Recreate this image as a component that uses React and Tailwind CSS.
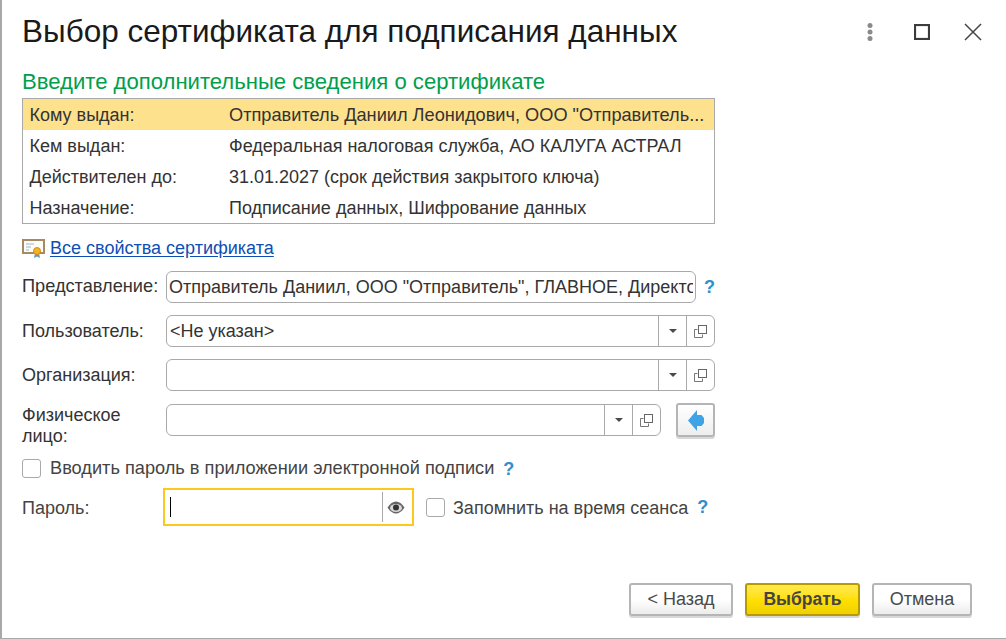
const F = { fontFamily: '"Liberation Sans", Arial, sans-serif' };

function Cert() {
  return (
    <svg width="24" height="21" viewBox="0 0 24 21" className="shrink-0">
      <rect x="1" y="2" width="21" height="13" fill="#fdfdf8" stroke="#a58a64" strokeWidth="2" />
      <path d="M4 6h8M4 9h5M4 12h3" stroke="#9db4cc" strokeWidth="1" />
      <path d="M13 15l-1 5 3-1.500 3 1.500-1-5z" fill="#5b9bd5" />
      <circle cx="15" cy="13" r="3.500" fill="#f5b324" stroke="#d98c10" />
    </svg>
  );
}

function Copy() {
  return (
    <svg width="15" height="15" viewBox="0 0 15 15" fill="none">
      <path d="M4.500 5.500H1.500v8h8V10.500" stroke="#777" />
      <rect x="5.500" y="1.500" width="8" height="8" stroke="#666" />
    </svg>
  );
}

function Tri() {
  return <div className="w-0 h-0 border-l-[4px] border-r-[4px] border-t-[4px] border-l-transparent border-r-transparent border-t-[#4a4a4a]" />;
}

function Q({ className = "" }) {
  return <span className={`text-[#2f8fce] font-bold text-[18px] leading-none ${className}`}>?</span>;
}

function Combo({ value, width }) {
  return (
    <div className={`flex h-[32px] border border-[#a9a9a9] rounded-[6px] bg-white ${width}`}>
      <div className="flex-1 pl-[3px] leading-[30px] text-[#333]">{value}</div>
      <div className="w-[28px] border-l border-[#a9a9a9] flex items-center justify-center"><Tri /></div>
      <div className="w-[28px] border-l border-[#a9a9a9] flex items-center justify-center"><Copy /></div>
    </div>
  );
}

function Check({ className = "" }) {
  return <div className={`w-[19px] h-[19px] border border-[#a9a9a9] rounded-[3px] bg-white shrink-0 ${className}`} />;
}

function Btn({ children, width, primary }) {
  return (
    <button
      className={
        primary
          ? `h-[33px] ${width} rounded-[3px] border-2 border-[#b59a00] bg-gradient-to-b from-[#ffe94a] via-[#ffe000] to-[#f0d000] text-[#444] font-bold text-[17.500px] shadow-[0_2px_0_#d8d8d8]`
          : `h-[33px] ${width} rounded-[3px] border-2 border-[#b5b5b5] bg-gradient-to-b from-white via-white to-[#ececec] text-[#4a4a4a] text-[18px] shadow-[0_2px_0_#d8d8d8]`
      }
    >
      {children}
    </button>
  );
}

const rows = [
  ["Кому выдан:", "Отправитель Даниил Леонидович, ООО \"Отправитель..."],
  ["Кем выдан:", "Федеральная налоговая служба, АО КАЛУГА АСТРАЛ"],
  ["Действителен до:", "31.01.2027 (срок действия закрытого ключа)"],
  ["Назначение:", "Подписание данных, Шифрование данных"],
];

export default function App() {
  return (
    <div style={F} className="w-[1006px] h-[639px] bg-white border-l-2 border-b border-[#a9a9a9] flex flex-col pl-[20px] overflow-hidden text-[18px] text-[#333]">
      <div className="flex items-center h-[64px] shrink-0">
        <h1 className="text-[31.500px] leading-none text-[#1a1a1a] flex-1 whitespace-nowrap">Выбор сертификата для подписания данных</h1>
        <div className="flex items-center gap-[34px] pr-[24px]">
          <svg width="8" height="20" viewBox="0 0 8 20" fill="#8a8a8a" className="mr-[6px]">
            <circle cx="4" cy="3.500" r="2.500" /><circle cx="4" cy="10" r="2.500" /><circle cx="4" cy="16.500" r="2.500" />
          </svg>
          <svg width="16" height="16" viewBox="0 0 16 16" fill="none"><rect x="1" y="1" width="14" height="14" stroke="#3c3c3c" strokeWidth="2.200" /></svg>
          <svg width="18" height="18" viewBox="0 0 18 18" fill="none"><path d="M1 1l16 16M17 1L1 17" stroke="#444" strokeWidth="1.500" /></svg>
        </div>
      </div>

      <div className="text-[22.100px] leading-[24px] text-[#00a04a] mt-[6px] whitespace-nowrap">Введите дополнительные сведения о сертификате</div>

      <div className="w-[693px] h-[126px] border border-[#a9a9a9] mt-[4px] shrink-0">
        {rows.map(([a, b], i) => (
          <div key={a} className={`flex h-[31px] leading-[32px] pl-[6.500px] text-[#333] ${i === 0 ? "bg-[#fde18c]" : ""}`}>
            <div className="w-[199.500px]">{a}</div>
            <div className={`whitespace-nowrap ${i === 0 ? "text-[18.200px]" : ""}`}>{b}</div>
          </div>
        ))}
      </div>

      <div className="flex items-center h-[22px] mt-[13px] gap-[4px] shrink-0">
        <Cert />
        <a className="text-[#0d4fb5] underline underline-offset-2 leading-[24px]">Все свойства сертификата</a>
      </div>

      <div className="flex items-center h-[32px] mt-[12px] shrink-0">
        <div className="w-[144px] whitespace-nowrap text-[18.200px]">Представление:</div>
        <div className="w-[530px] h-[32px] border border-[#a9a9a9] rounded-[6px] px-[2px] leading-[30px] text-[#333]">
          <div className="overflow-hidden whitespace-nowrap">Отправитель Даниил, ООО "Отправитель", ГЛАВНОЕ, Директор</div>
        </div>
        <Q className="ml-[8px]" />
      </div>

      <div className="flex items-center mt-[12px] shrink-0">
        <div className="w-[144px]">Пользователь:</div>
        <Combo value="<Не указан>" width="w-[549px]" />
      </div>

      <div className="flex items-center mt-[12px] shrink-0">
        <div className="w-[144px]">Организация:</div>
        <Combo value="" width="w-[549px]" />
      </div>

      <div className="flex items-start mt-[13px] h-[32px] shrink-0">
        <div className="w-[144px] h-[32px] leading-[21px] pt-[1px]">Физическое<br />лицо:</div>
        <Combo value="" width="w-[495px]" />
        <button className="ml-[15px] -mt-[1px] w-[39px] h-[34px] rounded-[3px] border-2 border-[#b5b5b5] bg-gradient-to-b from-white to-[#eeeeee] shadow-[0_2px_0_#d8d8d8] flex items-center justify-center">
          <svg width="16" height="21" viewBox="0 0 16 21"><path d="M9 0L0 10.500 9 21v-5h4.500l2.500-3V8l-2.500-3H9z" fill="#3fa3e6" /></svg>
        </button>
      </div>

      <div className="flex items-center mt-[22px] h-[21px] shrink-0 text-[#444]">
        <Check />
        <span className="ml-[9px] text-[18.200px]">Вводить пароль в приложении электронной подписи</span>
        <Q className="ml-[9px]" />
      </div>

      <div className="flex items-center mt-[9px] h-[38px] shrink-0 text-[#444]">
        <div className="w-[141px] pt-[2px]">Пароль:</div>
        <div className="w-[251px] h-[38px] border-2 border-[#fcc81e] flex items-center">
          <div className="flex-1 pl-[5px] flex items-center"><div className="w-px h-[20px] bg-black" /></div>
          <div className="w-[30px] h-[30px] border-l border-[#a9a9a9] flex items-center justify-center pr-[3px]">
            <svg width="18" height="13" viewBox="0 0 18 13">
              <path d="M0.500 6.500C3 2.500 6 0.500 9 0.500S15 2.500 17.500 6.500C15 10.500 12 12.500 9 12.500S3 10.500 0.500 6.500z" fill="#666" />
              <ellipse cx="9" cy="7" rx="6" ry="4" fill="#d8d8d8" />
              <circle cx="9" cy="6.500" r="3" fill="#333" />
            </svg>
          </div>
        </div>
        <Check className="ml-[12px]" />
        <span className="ml-[8px] pt-[2px]">Запомнить на время сеанса</span>
        <Q className="ml-[9px]" />
      </div>

      <div className="flex justify-end gap-[12px] mt-[57px] pr-[34px] shrink-0">
        <Btn width="w-[104px]">&lt; Назад</Btn>
        <Btn width="w-[115px]" primary>Выбрать</Btn>
        <Btn width="w-[100px]">Отмена</Btn>
      </div>
    </div>
  );
}
